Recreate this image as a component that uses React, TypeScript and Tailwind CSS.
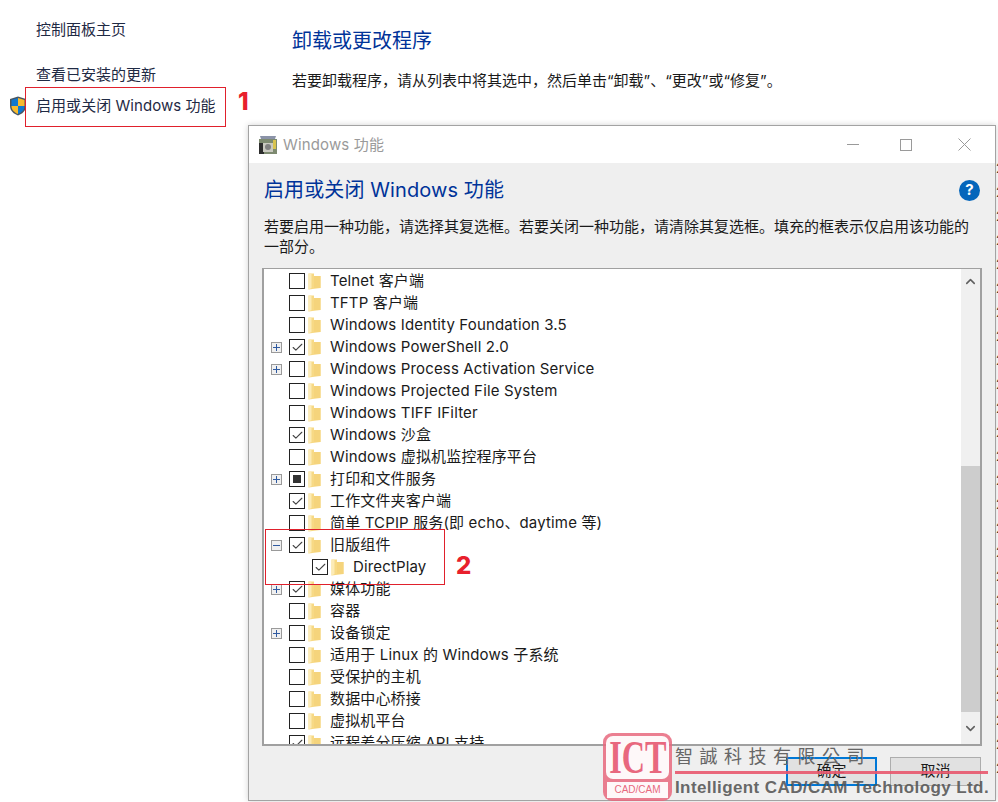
import { Check, ChevronDown, ChevronUp } from 'lucide-react';

type Feature = {
  label: string;
  state: 'off' | 'on' | 'partial';
  expander?: 'plus' | 'minus';
  indent?: boolean;
};

const features: Feature[] = [
  { label: 'Telnet 客户端', state: 'off' },
  { label: 'TFTP 客户端', state: 'off' },
  { label: 'Windows Identity Foundation 3.5', state: 'off' },
  { label: 'Windows PowerShell 2.0', state: 'on', expander: 'plus' },
  { label: 'Windows Process Activation Service', state: 'off', expander: 'plus' },
  { label: 'Windows Projected File System', state: 'off' },
  { label: 'Windows TIFF IFilter', state: 'off' },
  { label: 'Windows 沙盒', state: 'on' },
  { label: 'Windows 虚拟机监控程序平台', state: 'off' },
  { label: '打印和文件服务', state: 'partial', expander: 'plus' },
  { label: '工作文件夹客户端', state: 'on' },
  { label: '简单 TCPIP 服务(即 echo、daytime 等)', state: 'off' },
  { label: '旧版组件', state: 'on', expander: 'minus' },
  { label: 'DirectPlay', state: 'on', indent: true },
  { label: '媒体功能', state: 'on', expander: 'plus' },
  { label: '容器', state: 'off' },
  { label: '设备锁定', state: 'off', expander: 'plus' },
  { label: '适用于 Linux 的 Windows 子系统', state: 'off' },
  { label: '受保护的主机', state: 'off' },
  { label: '数据中心桥接', state: 'off' },
  { label: '虚拟机平台', state: 'off' },
  { label: '远程差分压缩 API 支持', state: 'on' },
];

const Folder = () => (
  <svg width="13" height="17" viewBox="0 0 13 17" className="shrink-0">
    <path d="M0.5 0.5 L6 0.5 L6 3 L12.5 3 L12.5 15 L0.5 16.5 Z" fill="#f7d985" />
    <path d="M0.5 0.5 L3.5 0.5 L3.5 15 L0.5 16.5 Z" fill="#fcebb6" />
    <path d="M6 3 L12.5 3 L12.5 15 L6 15 Z" fill="#f5d47c" />
  </svg>
);

const Expander = ({ kind }: { kind?: 'plus' | 'minus' }) => (
  <span className="w-[11px] h-[11px] shrink-0 border border-[#9a9a9a] bg-[#f0f0f0] relative">
    {kind && <span className="absolute left-[1px] right-[1px] top-[4px] h-[1px] bg-[#2f5aa0]" />}
    {kind === 'plus' && <span className="absolute top-[1px] bottom-[1px] left-[4px] w-[1px] bg-[#2f5aa0]" />}
  </span>
);

const FeatureRow = ({ label, state, expander, indent }: Feature) => (
  <div className="h-[22px] flex items-center shrink-0">
    <div className="w-[7px] shrink-0" />
    {expander ? <Expander kind={expander} /> : <div className="w-[11px] shrink-0" />}
    <div className={indent ? 'w-[30px] shrink-0' : 'w-[7px] shrink-0'} />
    <span className="w-[16px] h-[16px] shrink-0 border border-[#222222] bg-white flex items-center justify-center">
      {state === 'on' && <Check size={13} strokeWidth={2} className="text-[#444444]" />}
      {state === 'partial' && <span className="w-[8px] h-[8px] bg-[#333333]" />}
    </span>
    <div className="w-[3px] shrink-0" />
    <Folder />
    <span className="ml-[9px] pt-[1px] text-[15px] tracking-[0.15px] text-[#1a1a1a] whitespace-nowrap">{label}</span>
  </div>
);

const WindowsIcon = () => (
  <svg width="20" height="20" viewBox="0 0 20 20" className="shrink-0">
    <path d="M2 1 L18 1 L17 4 L3 4 Z" fill="#8b93a8" />
    <rect x="1" y="4" width="18" height="15" fill="#7d8a70" />
    <rect x="1" y="8" width="5" height="11" fill="#2d2d2d" />
    <rect x="5" y="8" width="10" height="9" fill="#c9c9c0" />
    <circle cx="10" cy="12" r="3" fill="#808080" />
    <rect x="15" y="5" width="3" height="9" fill="#d9c44f" />
  </svg>
);

const Shield = () => (
  <svg width="18" height="20" viewBox="0 0 18 20" className="shrink-0">
    <path d="M9 0.5 L17 3 L17 10 C17 15 13 18 9 19.5 C5 18 1 15 1 10 L1 3 Z" fill="#4a5560" />
    <path d="M9 2 L2.5 4 L2.5 10 L9 10 Z" fill="#0f78d0" />
    <path d="M9 2 L15.5 4 L15.5 10 L9 10 Z" fill="#f7bb2e" />
    <path d="M2.5 10 L9 10 L9 18 C5.5 16.5 2.5 14 2.5 10 Z" fill="#f7bb2e" />
    <path d="M15.5 10 L9 10 L9 18 C12.5 16.5 15.5 14 15.5 10 Z" fill="#0f78d0" />
  </svg>
);

const Watermark = () => (
  <div className="absolute left-[603px] top-[733px] w-[390px] h-[69px] flex">
    <div className="w-[69px] h-[68px] shrink-0 rounded-[9px] bg-[#e8687e]/85 p-[3px] flex flex-col gap-[3px]">
      <div className="h-[43px] rounded-[7px] bg-white/95 flex items-center justify-center overflow-hidden">
        <span className="scale-x-[0.7] font-['Liberation_Serif',serif] font-bold text-[46px] leading-none text-[#e8687e]">ICT</span>
      </div>
      <div className="flex-1 mx-[1px] bg-white/95 flex items-center justify-center font-['Liberation_Sans',sans-serif] text-[10px] leading-none text-[#e8687e]">
        CAD/CAM
      </div>
    </div>
    <div className="ml-[3px] flex flex-col">
      <div className="h-[33px] flex items-center pt-[10px] text-[18px] leading-none tracking-[6.5px] text-[#666666] font-['Noto_Sans_CJK_TC',serif] whitespace-nowrap">
        智誠科技有限公司
      </div>
      <div className="mt-[5px] h-[3px] w-[313px] bg-[#e8586e]/90" />
      <div className="mt-[2px] text-[17px] leading-[24px] font-bold tracking-[0.4px] text-[#555555]/90 font-['Liberation_Sans',sans-serif] whitespace-nowrap">
        Intelligent CAD/CAM Technology Ltd.
      </div>
    </div>
  </div>
);

const FeatureDialog = () => (
  <div className="absolute left-[248px] top-[125px] w-[748px] h-[676px] border border-[#a3a3a3] bg-[#efefef] flex flex-col shadow-[0_0_6px_rgba(0,0,0,0.18)]">
    <div className="h-[37px] shrink-0 bg-white flex items-center pl-[9px]">
      <WindowsIcon />
      <span className="ml-[5px] pt-[1px] text-[15px] tracking-[0.15px] text-[#9a9a9a]">Windows 功能</span>
      <div className="ml-auto flex items-center">
        <span className="w-[12px] h-[1px] bg-[#9a9a9a]" />
        <span className="ml-[41px] w-[12px] h-[12px] border border-[#9a9a9a]" />
        <svg width="13" height="13" viewBox="0 0 13 13" className="ml-[46px] mr-[24px]">
          <path d="M0.5 0.5 L12.5 12.5 M12.5 0.5 L0.5 12.5" stroke="#9a9a9a" strokeWidth="1" />
        </svg>
      </div>
    </div>

    <div className="flex-1 flex flex-col px-[13px] min-h-0">
      <div className="h-[52px] shrink-0 flex items-center justify-between pl-[2px] pr-[2px] pt-[2px]">
        <h2 className="text-[20px] tracking-[0.1px] font-normal text-[#003399]">启用或关闭 Windows 功能</h2>
        <span className="w-[21px] h-[21px] rounded-full bg-[#0566bb] text-white text-[15px] font-bold flex items-center justify-center">?</span>
      </div>
      <p className="mt-[2px] ml-[2px] w-[716px] text-[15px] leading-[20px] text-[#1a1a1a]">
        若要启用一种功能，请选择其复选框。若要关闭一种功能，请清除其复选框。填充的框表示仅启用该功能的一部分。
      </p>
      <div className="mt-[11px] h-[478px] shrink-0 border-2 border-t border-[#a0a0a0] bg-white flex overflow-hidden">
        <div className="flex-1 flex flex-col pt-[1px] overflow-hidden">
          {features.map((f) => (
            <FeatureRow key={f.label} {...f} />
          ))}
        </div>
        <div className="w-[19px] shrink-0 bg-[#f0f0f0] flex flex-col">
          <div className="h-[24px] shrink-0 flex items-center justify-center">
            <ChevronUp size={15} strokeWidth={2.5} className="text-[#606060]" />
          </div>
          <div className="mt-[173px] h-[246px] shrink-0 bg-[#cdcdcd]" />
          <div className="flex-1 flex items-center justify-center">
            <ChevronDown size={15} strokeWidth={2.5} className="text-[#606060]" />
          </div>
        </div>
      </div>
      <div className="mt-[11px] flex justify-end gap-[13px] pr-[1px]">
        <button type="button" className="w-[91px] h-[29px] border-2 border-[#0078d7] bg-[#e1e1e1] text-[15px] text-[#1a1a1a]">确定</button>
        <button type="button" className="w-[91px] h-[29px] border border-[#adadad] bg-[#e1e1e1] text-[15px] text-[#1a1a1a]">取消</button>
      </div>
    </div>
  </div>
);

// installed programs list behind the dialog, only its edges show
const rows = Array.from({ length: 26 }, (_, i) => i);

export default function App() {
  return (
    <div className="relative w-[998px] h-[802px] overflow-hidden bg-white flex font-['Inter','Noto_Sans_CJK_SC',sans-serif]">
      <aside className="w-[292px] shrink-0 pt-[19px] text-[15px] text-[#1f2a44]">
        <div className="pl-[36px] leading-[22px]">控制面板主页</div>
        <div className="mt-[23px] pl-[36px] leading-[22px]">查看已安装的更新</div>
        <div className="mt-[8px] flex items-center pl-[9px] leading-[22px]">
          <Shield />
          <span className="ml-[9px] pt-[1px] tracking-[0.05px] whitespace-nowrap">启用或关闭 Windows 功能</span>
        </div>
      </aside>

      <main className="flex-1 pt-[27px] min-w-0">
        <h1 className="text-[20px] leading-[28px] font-normal text-[#003399]">卸载或更改程序</h1>
        <p className="mt-[15px] text-[15px] leading-[22px] text-[#1a1a1a]">
          若要卸载程序，请从列表中将其选中，然后单击“卸载”、“更改”或“修复”。
        </p>
        <div className="mt-[64px] flex flex-col items-end overflow-hidden">
          {rows.map((d) => (
            <div key={d} className="h-[24px] w-[2px] overflow-hidden text-[13px] leading-[24px] text-[#333333]">2</div>
          ))}
          <div className="self-start h-[24px] pl-[65px] text-[15px] leading-[8px] whitespace-nowrap text-[#1a1a1a]">
            金山软件管理程序 - 中文版本升级包
          </div>
        </div>
      </main>

      <FeatureDialog />

      <div className="absolute left-[25px] top-[87px] w-[201px] h-[40px] border border-[#e0202c]" />
      <span className="absolute left-[238px] top-[87px] text-[24px] leading-[30px] font-extrabold text-[#e8202c]">1</span>
      <div className="absolute left-[265px] top-[529px] w-[180px] h-[56px] border border-[#e0202c]" />
      <span className="absolute left-[456px] top-[551px] text-[24px] leading-[30px] font-extrabold text-[#e8202c]">2</span>

      <Watermark />
    </div>
  );
}
